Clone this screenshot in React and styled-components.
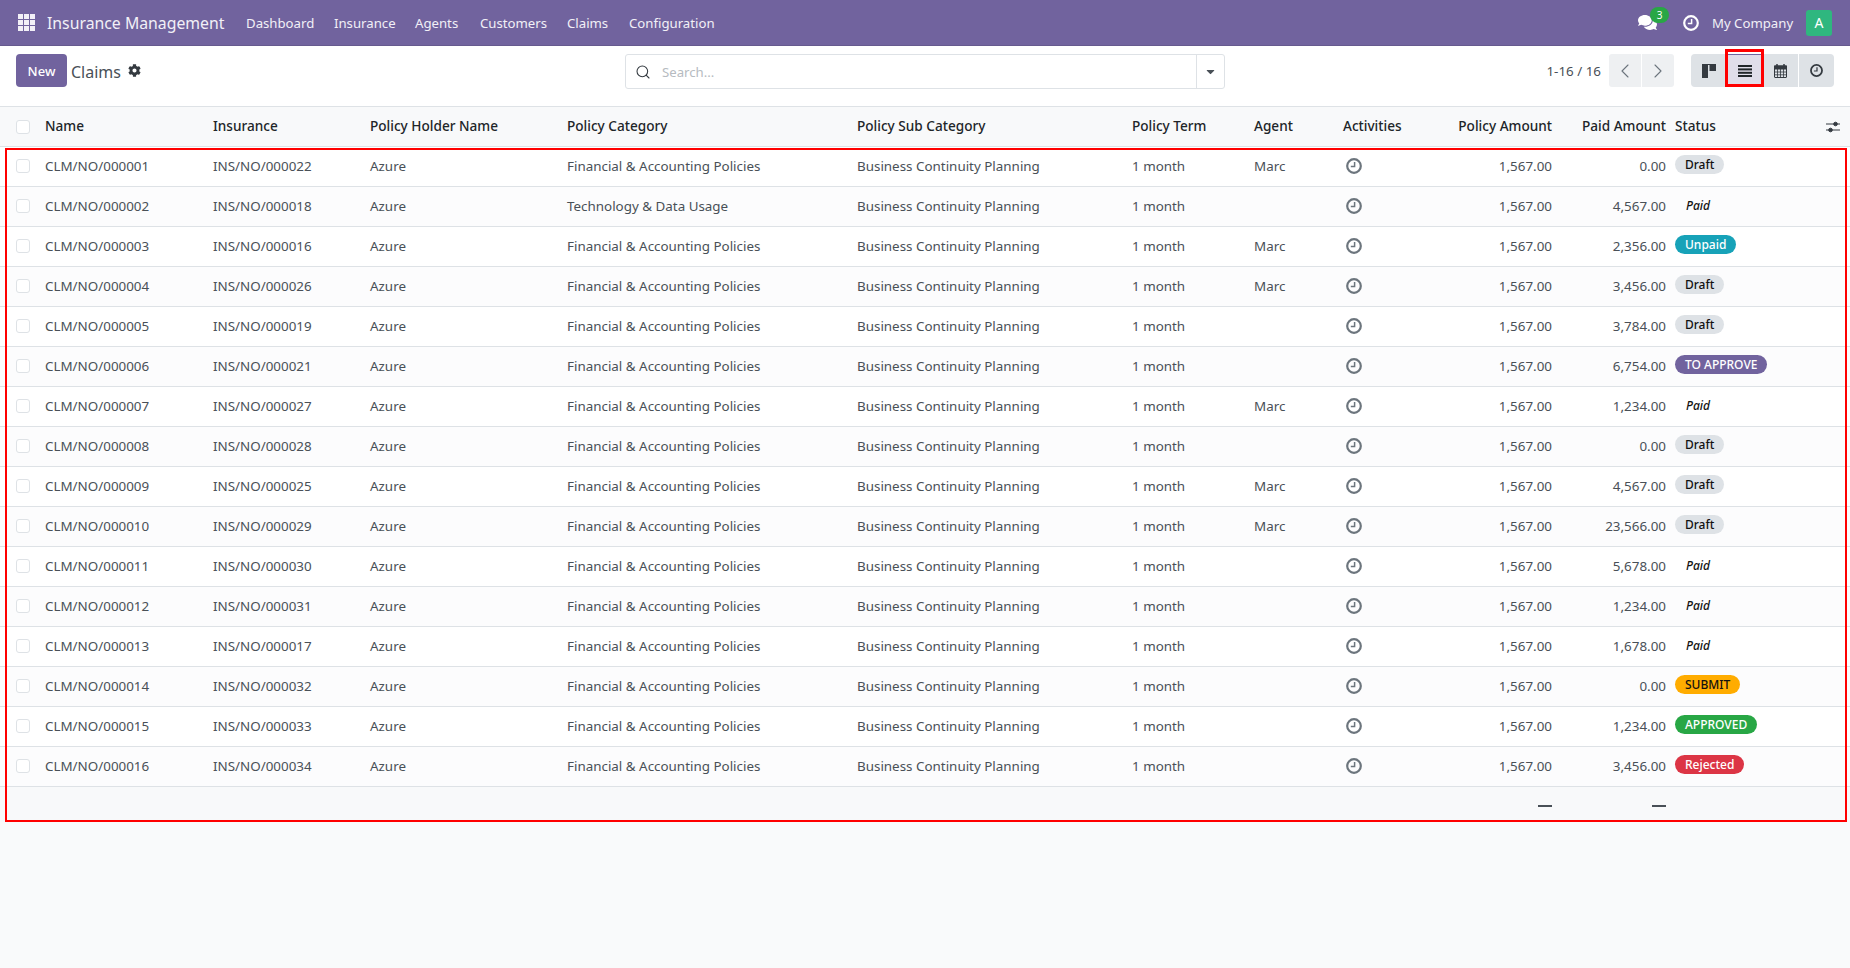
import React from 'react';
import styled, { createGlobalStyle } from 'styled-components';
import { FaCog, FaComments, FaCaretDown } from 'react-icons/fa';
import { ChevronLeft, ChevronRight, Search } from 'lucide-react';

const FONT = '"Noto Sans", "Open Sans", sans-serif';

const menus = [
    { name: 'Dashboard', width: 88 },
    { name: 'Insurance', width: 81 },
    { name: 'Agents', width: 65 },
    { name: 'Customers', width: 87 },
    { name: 'Claims', width: 62 },
    { name: 'Configuration', width: 100 },
];

const columns = [
    { label: 'Name', width: 168 },
    { label: 'Insurance', width: 157 },
    { label: 'Policy Holder Name', width: 197 },
    { label: 'Policy Category', width: 290 },
    { label: 'Policy Sub Category', width: 275 },
    { label: 'Policy Term', width: 122 },
    { label: 'Agent', width: 89 },
    { label: 'Activities', width: 80 },
    { label: 'Policy Amount', width: 145, right: true },
    { label: 'Paid Amount', width: 114, right: true },
    { label: 'Status', width: 176, status: true },
];

const rows = [
    ['000001', '000022', 'Marc', '0.00', 'Draft'],
    ['000002', '000018', '', '4,567.00', 'Paid'],
    ['000003', '000016', 'Marc', '2,356.00', 'Unpaid'],
    ['000004', '000026', 'Marc', '3,456.00', 'Draft'],
    ['000005', '000019', '', '3,784.00', 'Draft'],
    ['000006', '000021', '', '6,754.00', 'TO APPROVE'],
    ['000007', '000027', 'Marc', '1,234.00', 'Paid'],
    ['000008', '000028', '', '0.00', 'Draft'],
    ['000009', '000025', 'Marc', '4,567.00', 'Draft'],
    ['000010', '000029', 'Marc', '23,566.00', 'Draft'],
    ['000011', '000030', '', '5,678.00', 'Paid'],
    ['000012', '000031', '', '1,234.00', 'Paid'],
    ['000013', '000017', '', '1,678.00', 'Paid'],
    ['000014', '000032', '', '0.00', 'SUBMIT'],
    ['000015', '000033', '', '1,234.00', 'APPROVED'],
    ['000016', '000034', '', '3,456.00', 'Rejected'],
];

const badgeColors = {
    Draft: { bg: '#dee2e6', fg: '#111' },
    Unpaid: { bg: '#17a2b8', fg: '#fff' },
    'TO APPROVE': { bg: '#71639e', fg: '#fff' },
    SUBMIT: { bg: '#ffac00', fg: '#111' },
    APPROVED: { bg: '#28a745', fg: '#fff' },
    Rejected: { bg: '#dc3545', fg: '#fff' },
};

function AppsIcon() {
    const cells = [0, 6, 12];
    return (
        <svg width="17" height="17" viewBox="0 0 17 17" fill="#f2f0f7">
            {cells.map((y) => cells.map((x) => <rect key={`${x}-${y}`} x={x} y={y} width="5" height="5" />))}
        </svg>
    );
}

// thick ring with the hands going up and to the left
function ClockIcon({ size = 16, color = '#6c757d' }) {
    return (
        <svg width={size} height={size} viewBox="0 0 16 16" fill="none" stroke={color}>
            <circle cx="8" cy="8" r="6.8" strokeWidth="2.2" />
            <path d="M8.6 4v4.6H4.8" strokeWidth="1.5" />
        </svg>
    );
}

function KanbanIcon() {
    return (
        <svg width="14" height="14" viewBox="0 0 14 14" fill="#343a40">
            <rect x="0" y="0" width="14" height="1" />
            <rect x="0" y="0" width="6" height="14" />
            <rect x="7.5" y="0" width="6.5" height="7" />
        </svg>
    );
}

function ListIcon() {
    return (
        <svg width="14" height="12" viewBox="0 0 14 12" fill="#212529">
            <rect x="0" y="0" width="14" height="2" />
            <rect x="0" y="3.4" width="14" height="2" />
            <rect x="0" y="6.8" width="14" height="2" />
            <rect x="0" y="10" width="14" height="2" />
        </svg>
    );
}

function CalendarIcon() {
    return (
        <svg width="13" height="14" viewBox="0 0 13 14" fill="none" stroke="#343a40">
            <rect x="0.5" y="2" width="12" height="11.5" rx="0.5" />
            <rect x="0.5" y="2" width="12" height="3" fill="#343a40" />
            <path d="M0.5 8h12M0.5 10.8h12M3.5 5v8.5M6.5 5v8.5M9.5 5v8.5" strokeWidth="0.8" />
            <path d="M3 0v3M10 0v3" strokeWidth="1.5" />
        </svg>
    );
}

function AdjustIcon() {
    return (
        <svg width="14" height="12" viewBox="0 0 14 12" fill="#343a40" stroke="#343a40">
            <path d="M0 3h14M0 9h14" strokeWidth="1" />
            <circle cx="9.5" cy="3" r="1.8" />
            <circle cx="4.5" cy="9" r="1.8" />
        </svg>
    );
}

export default function App() {
    return (
        <>
            <GlobalStyle />
            <Page>
                <Navbar>
                    <AppsButton><AppsIcon /></AppsButton>
                    <Brand>Insurance Management</Brand>
                    <MenuList>
                        {menus.map((m) => (
                            <MenuItem key={m.name} $width={m.width}>{m.name}</MenuItem>
                        ))}
                    </MenuList>
                    <Systray>
                        <ChatWrap>
                            <FaComments size={19} color="#fff" />
                            <ChatBadge>3</ChatBadge>
                        </ChatWrap>
                        <ClockIcon color="#fff" />
                        <CompanyName>My Company</CompanyName>
                        <Avatar>A</Avatar>
                    </Systray>
                </Navbar>

                <ControlPanel>
                    <PanelLeft>
                        <NewButton>New</NewButton>
                        <PanelTitle>Claims</PanelTitle>
                        <FaCog size={13} color="#343a40" />
                    </PanelLeft>
                    <SearchBox>
                        <SearchIconWrap><Search size={16} strokeWidth={1.6} color="#343a40" /></SearchIconWrap>
                        <SearchText>Search...</SearchText>
                        <SearchCaret><FaCaretDown size={13} color="#495057" /></SearchCaret>
                    </SearchBox>
                    <PanelRight>
                        <PagerText>1-16 / 16</PagerText>
                        <PagerGroup>
                            <PagerButton><ChevronLeft size={24} strokeWidth={1.1} /></PagerButton>
                            <PagerButton><ChevronRight size={24} strokeWidth={1.1} /></PagerButton>
                        </PagerGroup>
                        <ViewGroup>
                            <ViewButton><KanbanIcon /></ViewButton>
                            <ViewButton $active><ListIcon /></ViewButton>
                            <ViewButton><CalendarIcon /></ViewButton>
                            <ViewButton><ClockIcon size={13} color="#343a40" /></ViewButton>
                        </ViewGroup>
                    </PanelRight>
                </ControlPanel>

                <ListTable>
                    <colgroup>
                        <col style={{ width: 37 }} />
                        {columns.map((c) => <col key={c.label} style={{ width: c.width }} />)}
                    </colgroup>
                    <thead>
                        <tr>
                            <HeadCell><CheckBox /></HeadCell>
                            {columns.map((c) => (
                                <HeadCell key={c.label} $right={c.right} $status={c.status}>{c.label}</HeadCell>
                            ))}
                        </tr>
                    </thead>
                    <tbody>
                        {rows.map(([claim, ins, agent, paid, status]) => (
                            <BodyRow key={claim}>
                                <Cell><CheckBox /></Cell>
                                <Cell>CLM/NO/{claim}</Cell>
                                <Cell>INS/NO/{ins}</Cell>
                                <Cell>Azure</Cell>
                                <Cell>{claim === '000002' ? 'Technology & Data Usage' : 'Financial & Accounting Policies'}</Cell>
                                <Cell>Business Continuity Planning</Cell>
                                <Cell>1 month</Cell>
                                <Cell>{agent}</Cell>
                                <Cell><ActivityIcon><ClockIcon /></ActivityIcon></Cell>
                                <Cell $right>1,567.00</Cell>
                                <Cell $right>{paid}</Cell>
                                <Cell $status>
                                    {status === 'Paid'
                                        ? <PaidText>Paid</PaidText>
                                        : <Badge $bg={badgeColors[status].bg} $fg={badgeColors[status].fg}>{status}</Badge>}
                                </Cell>
                            </BodyRow>
                        ))}
                    </tbody>
                    <tfoot>
                        <tr>
                            <FootCell colSpan={9} />
                            <FootCell $right><Dash /></FootCell>
                            <FootCell $right><Dash /></FootCell>
                            <FootCell />
                        </tr>
                    </tfoot>
                </ListTable>

                <AdjustButton><AdjustIcon /></AdjustButton>
                <TableHighlight />
                <ButtonHighlight />
            </Page>
        </>
    );
}

const GlobalStyle = createGlobalStyle`
    html, body {
        margin: 0;
        padding: 0;
        background: #f9fafb;
    }
    body {
        font-family: ${FONT};
        font-size: 13.4px;
        color: #495057;
    }
`;

const Page = styled.div`
    position: relative;
    width: 1850px;
    height: 968px;
    overflow: hidden;
`;

const Navbar = styled.header`
    box-sizing: border-box;
    height: 46px;
    padding: 0 18px;
    display: flex;
    align-items: center;
    background: #71639e;
    border-bottom: 1px solid #665a8e;
    color: #fff;
`;

const AppsButton = styled.div`
    display: flex;
    width: 29px;
`;

const Brand = styled.div`
    width: 199px;
    font-size: 15.8px;
    color: #f2f0f7;
`;

const MenuList = styled.nav`
    display: flex;
    flex: 1;
`;

const MenuItem = styled.div`
    width: ${(p) => p.$width}px;
    font-size: 13.2px;
    color: #f2f0f7;
`;

const Systray = styled.div`
    display: flex;
    align-items: center;
`;

const ChatWrap = styled.div`
    position: relative;
    display: flex;
    margin-right: 26px;
`;

const ChatBadge = styled.span`
    position: absolute;
    left: 12px;
    top: -6px;
    width: 19px;
    height: 16px;
    border-radius: 8px;
    background: #28a745;
    color: #fff;
    font-size: 10px;
    line-height: 16px;
    text-align: center;
`;

const CompanyName = styled.div`
    margin: 0 13px;
    width: 81px;
    font-size: 13.2px;
    white-space: nowrap;
    color: #f2f0f7;
`;

const Avatar = styled.div`
    width: 26px;
    height: 26px;
    border-radius: 3px;
    background: #2fb77f;
    color: #fff;
    font-size: 14px;
    line-height: 26px;
    text-align: center;
`;

const ControlPanel = styled.section`
    box-sizing: border-box;
    height: 60px;
    padding: 8px 16px 0;
    display: grid;
    grid-template-columns: 609px 600px 1fr;
    background: #fff;
    align-items: start;
`;

const PanelLeft = styled.div`
    display: flex;
    align-items: center;
    height: 33px;
`;

const NewButton = styled.button`
    box-sizing: border-box;
    width: 51px;
    height: 33px;
    padding: 0;
    border: 0;
    border-radius: 4px;
    background: #71639e;
    color: #fff;
    font-family: ${FONT};
    font-size: 13px;
    font-weight: 500;
`;

const PanelTitle = styled.div`
    margin: 2px 7px 0 4px;
    font-size: 16px;
    color: #495057;
`;

const SearchBox = styled.div`
    box-sizing: border-box;
    height: 35px;
    display: flex;
    align-items: center;
    border: 1px solid #dee2e6;
    border-radius: 3px;
`;

const SearchIconWrap = styled.div`
    display: flex;
    margin-left: 9px;
`;

const SearchText = styled.div`
    flex: 1;
    margin-left: 11px;
    font-size: 13.2px;
    color: #b6bbc1;
`;

const SearchCaret = styled.div`
    box-sizing: border-box;
    width: 28px;
    height: 100%;
    display: flex;
    align-items: center;
    justify-content: center;
    border-left: 1px solid #dee2e6;
`;

const PanelRight = styled.div`
    display: flex;
    justify-content: flex-end;
    align-items: center;
    height: 33px;
`;

const PagerText = styled.div`
    margin-right: 8px;
    font-size: 13.4px;
    color: #495057;
`;

const PagerGroup = styled.div`
    display: flex;
    gap: 1px;
    margin-right: 17px;
    border-radius: 3px;
    overflow: hidden;
`;

const PagerButton = styled.div`
    width: 32px;
    height: 33px;
    display: flex;
    align-items: center;
    justify-content: center;
    background: #eef0f2;
    color: #6c757d;
`;

const ViewGroup = styled.div`
    display: flex;
    gap: 1px;
    border-radius: 4px;
    overflow: hidden;
`;

const ViewButton = styled.div`
    box-sizing: border-box;
    width: 35px;
    height: 33px;
    display: flex;
    align-items: center;
    justify-content: center;
    background: ${(p) => (p.$active ? '#e0dde9' : '#dee2e6')};
    border: ${(p) => (p.$active ? '1px solid #71639e' : '0')};
`;

const ListTable = styled.table`
    width: 1850px;
    table-layout: fixed;
    border-collapse: collapse;
    background: #fff;
`;

const HeadCell = styled.th`
    box-sizing: border-box;
    height: 40px;
    padding: ${(p) => (p.$status ? '0 0 2px 1px' : '0 8px 2px')};
    text-align: ${(p) => (p.$right ? 'right' : 'left')};
    background: #f8f9fa;
    border-top: 1px solid #dee2e6;
    border-bottom: 1px solid #dee2e6;
    font-size: 13.6px;
    font-weight: 500;
    color: #212529;
    white-space: nowrap;

    &:first-child {
        padding: 0 0 0 16px;
    }
`;

const BodyRow = styled.tr`
    background: #fff;
    &:nth-child(even) {
        background: #fcfcfd;
    }
`;

const Cell = styled.td`
    box-sizing: border-box;
    height: 40px;
    padding: ${(p) => (p.$status ? '0 0 2px 1px' : '0 8px 2px')};
    text-align: ${(p) => (p.$right ? 'right' : 'left')};
    border-bottom: 1px solid #dee2e6;
    font-size: 13.4px;
    color: #495057;
    white-space: nowrap;

    &:first-child {
        padding: 0 0 2px 16px;
    }
`;

const CheckBox = styled.div`
    box-sizing: border-box;
    width: 14px;
    height: 14px;
    border: 1px solid #dee2e6;
    border-radius: 3px;
    background: #fff;
`;

const ActivityIcon = styled.span`
    display: flex;
    align-items: center;
    padding-left: 3px;
`;

const Badge = styled.span`
    display: inline-block;
    position: relative;
    top: -1px;
    padding: 0 10px;
    height: 19px;
    border-radius: 10px;
    background: ${(p) => p.$bg};
    color: ${(p) => p.$fg};
    font-size: 12px;
    font-weight: 500;
    line-height: 19px;
`;

const PaidText = styled.span`
    position: relative;
    top: -1px;
    left: 11px;
    color: #111;
    font-size: 12px;
    font-weight: 500;
    font-style: italic;
`;

const FootCell = styled.td`
    height: 35px;
    padding: 0 8px;
    text-align: ${(p) => (p.$right ? 'right' : 'left')};
    background: #f8f9fa;
`;

const Dash = styled.span`
    display: inline-block;
    width: 14px;
    height: 1.5px;
    vertical-align: middle;
    background: #495057;
`;

const AdjustButton = styled.div`
    position: absolute;
    left: 1826px;
    top: 121px;
    display: flex;
`;

const TableHighlight = styled.div`
    position: absolute;
    left: 5px;
    top: 148px;
    width: 1842px;
    height: 674px;
    box-sizing: border-box;
    border: 2px solid #f00;
    pointer-events: none;
`;

const ButtonHighlight = styled.div`
    position: absolute;
    left: 1725px;
    top: 49px;
    width: 39px;
    height: 38px;
    box-sizing: border-box;
    border: 3px solid #f00;
    pointer-events: none;
`;
